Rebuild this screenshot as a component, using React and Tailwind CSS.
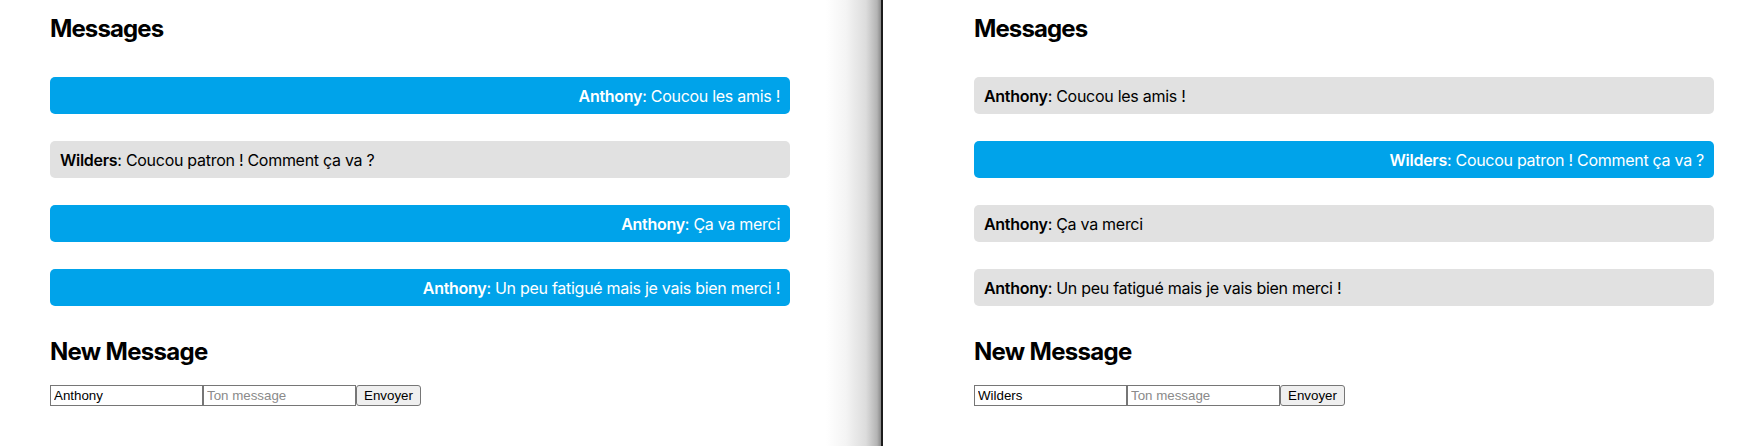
import React from "react";

const font = { fontFamily: "Inter, 'Noto Sans', sans-serif" };

function Bubble({ mine, name, text }) {
  return (
    <div
      className={
        "h-[37px] rounded-[5px] px-[10px] flex items-center text-[16px] tracking-[-0.28px] " +
        (mine
          ? "bg-[#00a3ea] text-white justify-end"
          : "bg-[#e1e1e1] text-black justify-start")
      }
    >
      <span>
        <b className="font-semibold">{name}</b>: {text}
      </span>
    </div>
  );
}

function Panel({ me, defaultName }) {
  const msgs = [
    { name: "Anthony", text: "Coucou les amis !" },
    { name: "Wilders", text: "Coucou patron ! Comment ça va ?" },
    { name: "Anthony", text: "Ça va merci" },
    { name: "Anthony", text: "Un peu fatigué mais je vais bien merci !" },
  ];
  return (
    <div className="w-[740px]" style={font}>
      <h2 className="pt-[14px] text-[24px] leading-[29px] font-bold tracking-[-0.9px] text-black">Messages</h2>
      <div className="mt-[34px] flex flex-col gap-[27px]">
        {msgs.map((m, i) => (
          <Bubble key={i} mine={m.name === me} name={m.name} text={m.text} />
        ))}
      </div>
      <h2 className="mt-[31px] text-[24px] leading-[29px] font-bold tracking-[-0.7px] text-black">New Message</h2>
      <div
        className="mt-[19px] flex items-center text-[13.33px]"
        style={{ fontFamily: "'Liberation Sans', Arial, sans-serif" }}
      >
        <input
          className="w-[153px] h-[21px] border border-[#767676] px-[3px] text-black bg-white outline-none"
          defaultValue={defaultName}
        />
        <input
          className="w-[153px] h-[21px] border border-[#767676] px-[3px] text-black bg-white placeholder:text-[#8a8a8a] outline-none"
          placeholder="Ton message"
        />
        <button className="w-[65px] h-[21px] border border-[#767676] rounded-[3px] bg-[#efefef] text-black">
          Envoyer
        </button>
      </div>
    </div>
  );
}

export default function App() {
  return (
    <div className="w-[1750px] h-[446px] flex bg-white overflow-hidden">
      <div className="w-[881px] h-full pl-[50px] bg-[linear-gradient(to_right,#ffffff_0px,#ffffff_826px,#f4f4f4_846px,#dcdcdc_866px,#b4b4b4_877px,#8a8a8a_881px)]">
        <Panel me="Anthony" defaultName="Anthony" />
      </div>
      <div className="w-[2px] h-full bg-[#1c1c1c]" />
      <div className="flex-1 h-full pl-[91px] bg-white">
        <Panel me="Wilders" defaultName="Wilders" />
      </div>
    </div>
  );
}
